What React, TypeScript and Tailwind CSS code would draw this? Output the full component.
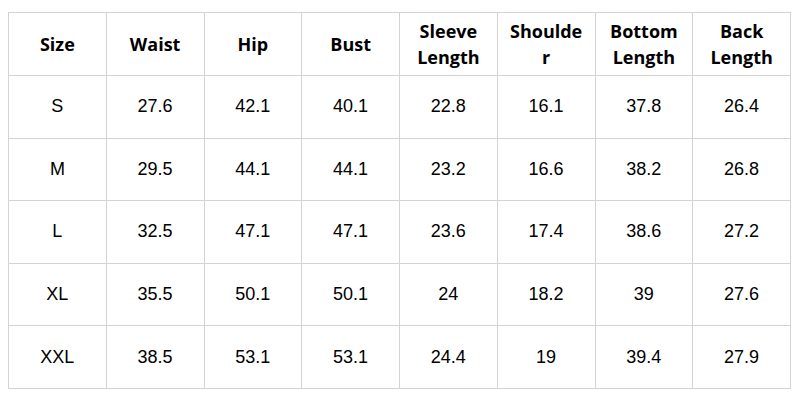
const headers: React.ReactNode[] = [
  'Size',
  'Waist',
  'Hip',
  'Bust',
  <>Sleeve<br />Length</>,
  <>Shoulde<br />r</>,
  <>Bottom<br />Length</>,
  <>Back<br />Length</>,
];

const rows = [
  ['S', '27.6', '42.1', '40.1', '22.8', '16.1', '37.8', '26.4'],
  ['M', '29.5', '44.1', '44.1', '23.2', '16.6', '38.2', '26.8'],
  ['L', '32.5', '47.1', '47.1', '23.6', '17.4', '38.6', '27.2'],
  ['XL', '35.5', '50.1', '50.1', '24', '18.2', '39', '27.6'],
  ['XXL', '38.5', '53.1', '53.1', '24.4', '19', '39.4', '27.9'],
];

export default function App() {
  return (
    <div className="w-[800px] h-[400px] bg-white pt-[12px] pl-[8px]">
      <table className="w-[783px] h-[376px] table-fixed border-collapse text-black">
        <thead>
          <tr className="h-[63px]">
            {headers.map((h, i) => (
              <th
                key={i}
                className="border border-[#d3d3d3] text-center align-middle font-bold text-[18px] leading-[26px] font-['Open_Sans',sans-serif]"
              >
                {h}
              </th>
            ))}
          </tr>
        </thead>
        <tbody>
          {rows.map(row => (
            <tr key={row[0]} className="h-[62.6px]">
              {row.map((cell, i) => (
                <td
                  key={i}
                  className="border border-[#d3d3d3] text-center align-middle text-[18px] font-['Liberation_Sans',Arial,sans-serif]"
                >
                  {cell}
                </td>
              ))}
            </tr>
          ))}
        </tbody>
      </table>
    </div>
  );
}
